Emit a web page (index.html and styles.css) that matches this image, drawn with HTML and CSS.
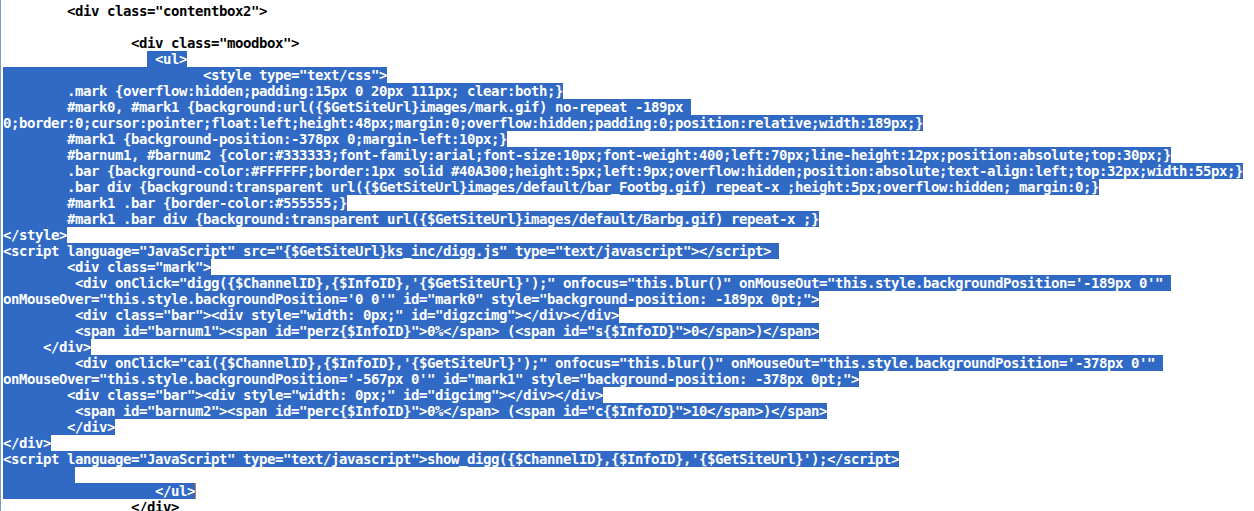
FILE: index.html
```html
<!DOCTYPE html>
<html>
<head>
<meta charset="utf-8">
<link rel="stylesheet" href="styles.css">
</head>
<body>
<div class="editor">
<div class="line">        &lt;div class="contentbox2"&gt;</div>
<div class="line"></div>
<div class="line">                &lt;div class="moodbox"&gt;</div>
<div class="line">                  <span class="sel"> &lt;ul&gt;</span></div>
<div class="line"><span class="sel">                         &lt;style type="text/css"&gt;</span></div>
<div class="line"><span class="sel">        .mark {overflow:hidden;padding:15px 0 20px 111px; clear:both;}</span></div>
<div class="line"><span class="sel">        #mark0, #mark1 {background:url({$GetSiteUrl}images/mark.gif) no-repeat -189px </span></div>
<div class="line"><span class="sel">0;border:0;cursor:pointer;float:left;height:48px;margin:0;overflow:hidden;padding:0;position:relative;width:189px;}</span></div>
<div class="line"><span class="sel">        #mark1 {background-position:-378px 0;margin-left:10px;}</span></div>
<div class="line"><span class="sel">        #barnum1, #barnum2 {color:#333333;font-family:arial;font-size:10px;font-weight:400;left:70px;line-height:12px;position:absolute;top:30px;}</span></div>
<div class="line"><span class="sel">        .bar {background-color:#FFFFFF;border:1px solid #40A300;height:5px;left:9px;overflow:hidden;position:absolute;text-align:left;top:32px;width:55px;}</span></div>
<div class="line"><span class="sel">        .bar div {background:transparent url({$GetSiteUrl}images/default/bar_Footbg.gif) repeat-x ;height:5px;overflow:hidden; margin:0;}</span></div>
<div class="line"><span class="sel">        #mark1 .bar {border-color:#555555;}</span></div>
<div class="line"><span class="sel">        #mark1 .bar div {background:transparent url({$GetSiteUrl}images/default/Barbg.gif) repeat-x ;}</span></div>
<div class="line"><span class="sel">&lt;/style&gt;</span></div>
<div class="line"><span class="sel">&lt;script language="JavaScript" src="{$GetSiteUrl}ks_inc/digg.js" type="text/javascript"&gt;&lt;/script&gt; </span></div>
<div class="line"><span class="sel">        &lt;div class="mark"&gt;</span></div>
<div class="line"><span class="sel">         &lt;div onClick="digg({$ChannelID},{$InfoID},'{$GetSiteUrl}');" onfocus="this.blur()" onMouseOut="this.style.backgroundPosition='-189px 0'" </span></div>
<div class="line"><span class="sel">onMouseOver="this.style.backgroundPosition='0 0'" id="mark0" style="background-position: -189px 0pt;"&gt;</span></div>
<div class="line"><span class="sel">         &lt;div class="bar"&gt;&lt;div style="width: 0px;" id="digzcimg"&gt;&lt;/div&gt;&lt;/div&gt;</span></div>
<div class="line"><span class="sel">         &lt;span id="barnum1"&gt;&lt;span id="perz{$InfoID}"&gt;0%&lt;/span&gt; (&lt;span id="s{$InfoID}"&gt;0&lt;/span&gt;)&lt;/span&gt;</span></div>
<div class="line"><span class="sel">     &lt;/div&gt;</span></div>
<div class="line"><span class="sel">         &lt;div onClick="cai({$ChannelID},{$InfoID},'{$GetSiteUrl}');" onfocus="this.blur()" onMouseOut="this.style.backgroundPosition='-378px 0'" </span></div>
<div class="line"><span class="sel">onMouseOver="this.style.backgroundPosition='-567px 0'" id="mark1" style="background-position: -378px 0pt;"&gt;</span></div>
<div class="line"><span class="sel">        &lt;div class="bar"&gt;&lt;div style="width: 0px;" id="digcimg"&gt;&lt;/div&gt;&lt;/div&gt;</span></div>
<div class="line"><span class="sel">         &lt;span id="barnum2"&gt;&lt;span id="perc{$InfoID}"&gt;0%&lt;/span&gt; (&lt;span id="c{$InfoID}"&gt;10&lt;/span&gt;)&lt;/span&gt;</span></div>
<div class="line"><span class="sel">        &lt;/div&gt;</span></div>
<div class="line"><span class="sel">&lt;/div&gt;</span></div>
<div class="line"><span class="sel">&lt;script language="JavaScript" type="text/javascript"&gt;show_digg({$ChannelID},{$InfoID},'{$GetSiteUrl}');&lt;/script&gt;</span></div>
<div class="line"><span class="sel">         </span></div>
<div class="line"><span class="sel">                   &lt;/ul&gt;</span><span class="caret"></span></div>
<div class="line">                &lt;/div&gt;</div>
</div>
</body>
</html>
```
FILE: styles.css
```css
html, body {
  margin: 0;
  padding: 0;
  background: #ffffff;
}

.editor {
  border-left: 1px solid #7f9db9;
  padding: 3px 0 0 2px;
  height: 508px;
  overflow: hidden;
  font-family: "DejaVu Sans Mono", "Liberation Mono", monospace;
  font-weight: bold;
  font-size: 14px;
  letter-spacing: -0.428px;
  color: #000000;
}

.line {
  height: 16px;
  line-height: 16px;
  white-space: pre;
}

.sel {
  display: inline-block;
  height: 16px;
  line-height: 16px;
  vertical-align: top;
  background: #316ac5;
  color: #ffffff;
}

.caret {
  display: inline-block;
  width: 1px;
  height: 16px;
  vertical-align: top;
  background: #c8823c;
}
```
